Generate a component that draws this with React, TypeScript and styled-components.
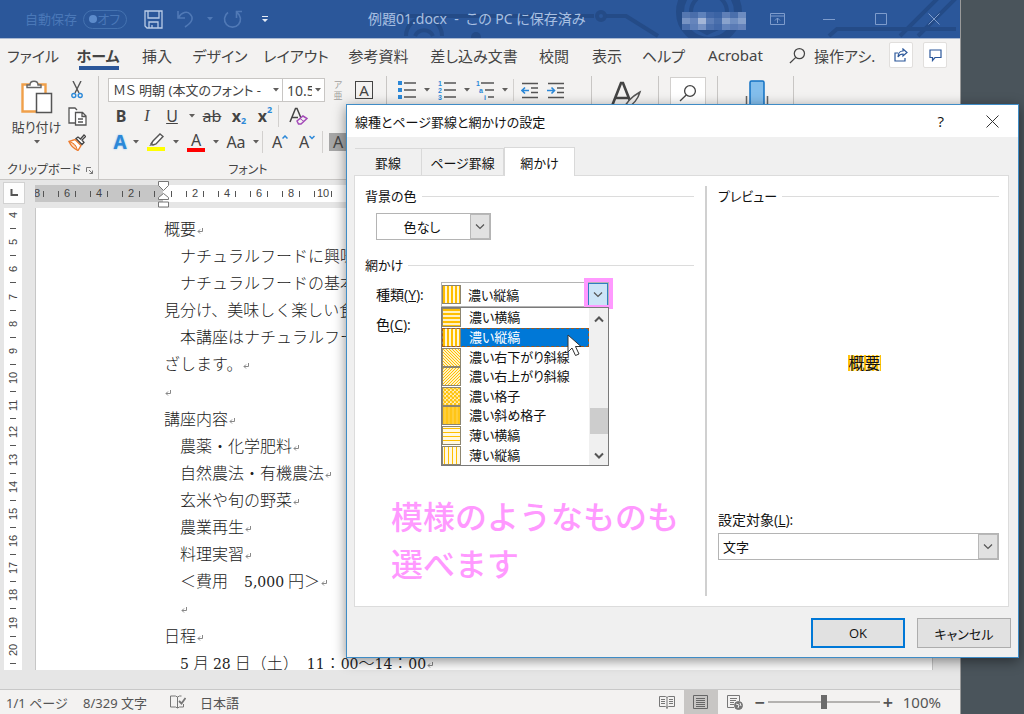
import React from "react";
import styled, { createGlobalStyle, css } from "styled-components";

const wordFont = `"Noto Sans", "Noto Sans CJK JP", sans-serif`;
const dialogFont = `"Open Sans", "Noto Sans CJK JP", sans-serif`;

const GlobalStyle = createGlobalStyle`
  *, *::before, *::after { box-sizing: border-box; }
  html, body { margin: 0; padding: 0; }
  body { overflow: hidden; font-family: ${wordFont}; font-feature-settings: "palt"; color: #444; }
  button, select, input { font: inherit; font-feature-settings: inherit; color: inherit; margin: 0; }
  button { padding: 0; border: 0; background: none; white-space: nowrap; }
  svg { display: block; flex: none; }
`;

/* ---------- desktop and window ---------- */

const Desktop = styled.div`
  position: relative;
  height: 100vh;
  overflow: hidden;
  background: #4a545b;
`;

const WordWindow = styled.div`
  display: flex;
  flex-direction: column;
  height: 100%;
  margin-right: 63px;
  background: #e6e6e6;
  border-right: 1px solid #9a9a9a;
`;

const TitleBar = styled.header`
  position: relative;
  display: flex;
  align-items: center;
  height: 38px;
  flex: none;
  overflow: hidden;
  background: #2b579a;
  color: #a9c0e2;
  font-size: 14px;
`;

const TitleDecor = styled.svg`
  position: absolute;
  top: 0;
  right: 0;
`;

const QuickAccess = styled.div`
  position: relative;
  display: flex;
  align-items: center;
  width: 368px;
  padding-left: 25px;
  flex: none;
`;

const AutoSave = styled.label`
  display: flex;
  align-items: center;
  gap: 6px;
  width: 118px;
  color: #4a78b8;
  font-size: 13px;
  line-height: 20px;
`;

const Toggle = styled.span`
  display: flex;
  align-items: center;
  justify-content: space-between;
  width: 44px;
  height: 19px;
  padding: 0 6px 0 5px;
  border: 1px solid #4472b0;
  border-radius: 10px;
`;

const ToggleKnob = styled.input`
  appearance: none;
  width: 8px;
  height: 8px;
  border-radius: 50%;
  background: #5c8bcb;
`;

const QuickButton = styled.button<{ $w: number }>`
  display: flex;
  align-items: center;
  justify-content: center;
  width: ${(p) => p.$w}px;
  height: 26px;
`;

const DocTitle = styled.div`
  position: relative;
  flex: 1;
  white-space: pre;
  line-height: 20px;
`;

const WindowButtons = styled.div`
  position: relative;
  display: flex;
  align-items: center;
`;

/* ---------- ribbon ---------- */

const TabBar = styled.nav`
  display: flex;
  align-items: center;
  height: 37px;
  flex: none;
  padding-bottom: 4px;
  background: #f3f2f1;
  border-top: 1px solid #aab9d2;
  font-size: 15px;
`;

const RibbonTab = styled.button<{ $w: number; $active?: boolean }>`
  position: relative;
  flex: none;
  width: ${(p) => p.$w}px;
  height: 32px;
  color: #444;
  ${(p) =>
    p.$active &&
    css`
      font-weight: 700;
      &::after {
        content: "";
        position: absolute;
        left: 13px;
        right: 11px;
        bottom: 1px;
        height: 4px;
        background: #2b579a;
      }
    `}
`;

const TellMe = styled.button`
  display: flex;
  align-items: center;
  gap: 8px;
  width: 93px;
  margin-left: 12px;
  overflow: hidden;
`;

const TabEnd = styled.div`
  display: flex;
  gap: 10px;
  margin-left: auto;
  padding-right: 13px;
`;

const SquareButton = styled.button`
  display: grid;
  place-items: center;
  width: 24px;
  height: 26px;
  border: 1px solid #e1dfdd;
  border-radius: 2px;
  background: #fff;
`;

const RibbonBody = styled.div`
  display: flex;
  height: 105px;
  flex: none;
  padding: 1px 0 0;
  background: #f3f2f1;
  border-bottom: 1px solid #c8c6c4;
`;

const Group = styled.section<{ $w: number; $pad?: number }>`
  display: flex;
  flex-direction: column;
  flex: none;
  width: ${(p) => p.$w}px;
  padding: 1px 0 0 ${(p) => p.$pad ?? 0}px;
  border-right: 1px solid #c8c6c4;
`;

const ToolRow = styled.div`
  display: flex;
  align-items: center;
  height: 26px;
`;

const Tool = styled.button<{ $w: number }>`
  display: flex;
  align-items: center;
  justify-content: center;
  flex: none;
  width: ${(p) => p.$w}px;
  height: 24px;
  color: #444;
  font-size: 16px;
  line-height: 24px;
`;

const ToolSeparator = styled.span`
  flex: none;
  width: 1px;
  height: 22px;
  margin: 0 3px 0 2px;
  background: #d2d0ce;
`;

const GroupLabel = styled.div<{ $center?: boolean }>`
  display: flex;
  align-items: center;
  justify-content: ${(p) => (p.$center ? "center" : "space-between")};
  height: 18px;
  margin-top: auto;
  padding: 0 5px 0 7px;
  font-size: 12px;
  line-height: 18px;
  white-space: nowrap;
`;

const ClipboardTools = styled.div`
  display: flex;
`;

const PasteButton = styled.button`
  display: flex;
  flex-direction: column;
  align-items: center;
  width: 65px;
  padding: 3px 0 0 8px;
  font-size: 13px;
  line-height: 20px;
  gap: 3px;
`;

const RibbonCombo = styled.span<{ $w: number }>`
  display: grid;
  align-items: center;
  width: ${(p) => p.$w}px;
  height: 24px;
  border: 1px solid #c8c6c4;
  background: #fff;
  & + & {
    border-left: 0;
  }
  > select,
  > svg {
    grid-area: 1 / 1;
  }
  > svg {
    justify-self: end;
    margin-right: 3px;
    pointer-events: none;
  }
`;

const RibbonSelect = styled.select`
  appearance: none;
  width: 100%;
  min-width: 0;
  height: 22px;
  padding: 0 12px 0 4px;
  border: 0;
  background: none;
  font-size: 14px;
`;

const FontSelect = styled(RibbonSelect)`
  font-size: 13px;
`;

const Ruby = styled.span`
  display: flex;
  flex-direction: column;
  color: #a19f9d;
  font-size: 9px;
  line-height: 11px;
`;

const BoxedA = styled.span`
  width: 18px;
  height: 18px;
  border: 1px solid #444;
  font-size: 15px;
  line-height: 16px;
`;

const ShadedA = styled.span`
  width: 18px;
  height: 18px;
  background: #a6a6a6;
  line-height: 18px;
`;

const BarLetter = styled.span<{ $bar: string }>`
  width: 18px;
  height: 20px;
  border-bottom: 4px solid ${(p) => p.$bar};
  line-height: 16px;
`;

const Script = styled.span<{ $up?: boolean }>`
  align-self: ${(p) => (p.$up ? "flex-start" : "flex-end")};
  color: #2b88d8;
  font-size: 9px;
  font-weight: 700;
  line-height: ${(p) => (p.$up ? 12 : 14)}px;
`;

const Styled = styled.span<{ $kind: "bold" | "italic" | "underline" | "strike" }>`
  font-weight: ${(p) => (p.$kind === "bold" ? 700 : 400)};
  font-style: ${(p) => (p.$kind === "italic" ? "italic" : "normal")};
  font-family: ${(p) => (p.$kind === "italic" ? `"Liberation Serif", serif` : "inherit")};
  text-decoration: ${(p) =>
    p.$kind === "underline" ? "underline" : p.$kind === "strike" ? "line-through" : "none"};
`;

const OutlineA = styled.span`
  color: #2b88d8;
  font-size: 19px;
  font-weight: 700;
  text-shadow: 0 0 2px #7db8ea;
`;

const FindBox = styled.button`
  display: flex;
  justify-content: center;
  width: 36px;
  height: 34px;
  margin-left: 11px;
  padding-top: 6px;
  border: 1px solid #d2d0ce;
  background: #fff;
`;

const TopTool = styled.button`
  display: flex;
  justify-content: center;
  padding: 1px 0 0 2px;
`;

/* ---------- document area ---------- */

const Workspace = styled.main`
  display: grid;
  grid-template-columns: 35px 1fr;
  grid-template-rows: 28px 1fr;
  flex: 1;
  min-height: 0;
  padding: 0 27px 19px 0;
  overflow: hidden;
`;

const TabStop = styled.button`
  width: 22px;
  height: 22px;
  margin: 2px 0 0 3px;
  background: #fdfdfd;
  border: 1px solid #d2d2d2;
  display: grid;
  place-items: center;
`;

const HRuler = styled.div`
  position: relative;
  display: flex;
  height: 17px;
  margin-top: 5px;
  overflow: hidden;
  background: linear-gradient(to right, #c6c6c6 128px, #fff 128px);
`;

const HRulerWrap = styled.div`
  position: relative;
`;

const HCell = styled.span<{ $half?: boolean }>`
  display: flex;
  align-items: center;
  justify-content: ${(p) => (p.$half ? "flex-end" : "space-between")};
  flex: none;
  width: ${(p) => (p.$half ? 16 : 32)}px;
  padding: 0 7px;
  font-family: "Liberation Sans", sans-serif;
  font-size: 11px;
  line-height: 17px;
  gap: ${(p) => (p.$half ? 3 : 0)}px;
  &::after,
  &::before {
    content: "";
    flex: none;
    width: 1px;
    height: 6px;
    background: #555;
  }
  &::before {
    display: ${(p) => (p.$half ? "none" : "block")};
  }
`;

const IndentMarker = styled.svg`
  position: absolute;
  left: 123px;
  top: 1px;
`;

const VRuler = styled.div`
  display: flex;
  flex-direction: column;
  width: 18px;
  margin-left: 4px;
  background: #fff;
  overflow: hidden;
`;

const VCell = styled.span`
  display: flex;
  flex-direction: column;
  align-items: center;
  flex: 1;
  font-family: "Liberation Sans", sans-serif;
  font-size: 11px;
  &::after {
    content: "";
    width: 6px;
    height: 1px;
    background: #555;
    margin-top: 6px;
  }
  > span {
    height: 14px;
    writing-mode: vertical-rl;
    transform: rotate(180deg);
    line-height: 14px;
    text-align: center;
  }
`;

const Page = styled.article`
  display: flex;
  flex-direction: column;
  gap: 1px;
  min-height: 0;
  overflow: hidden;
  padding: 8px 0 0 128px;
  background: #fff;
  border-left: 1px solid #c6c6c6;
  border-right: 1px solid #c6c6c6;
  color: #222;
  font-family: "Liberation Serif", "Noto Sans CJK JP", serif;
  font-feature-settings: normal;
  font-weight: 300;
  font-size: 16px;
`;

const DocLine = styled.p`
  display: flex;
  align-items: center;
  margin: 0;
  height: 27px;
  line-height: 27px;
  white-space: pre;
`;

const Digits = styled.span`
  font-family: "DejaVu Serif", serif;
  font-size: 14px;
`;

const StatusBar = styled.footer`
  display: flex;
  align-items: center;
  flex: none;
  height: 25px;
  padding: 0 19px 0 6px;
  border-top: 1px solid #c8c8c8;
  background: #f3f2f1;
  color: #555;
  font-size: 13px;
`;

const StatusItem = styled.span<{ $w?: number }>`
  width: ${(p) => (p.$w ? `${p.$w}px` : "auto")};
  white-space: nowrap;
`;

const ViewControls = styled.div`
  display: flex;
  align-items: center;
  height: 100%;
  margin-left: auto;
`;

const ViewButton = styled.button<{ $on?: boolean }>`
  display: grid;
  place-items: center;
  width: 34px;
  height: 24px;
  background: ${(p) => (p.$on ? "#c8c6c4" : "transparent")};
`;

const ZoomStep = styled.button`
  width: 16px;
  font-size: 18px;
  font-weight: 600;
  line-height: 20px;
`;

const ZoomSlider = styled.input`
  appearance: none;
  width: 112px;
  height: 16px;
  background: linear-gradient(#b4b2b0, #b4b2b0) center / 100% 2px no-repeat;
  &::-webkit-slider-thumb {
    appearance: none;
    width: 6px;
    height: 14px;
    background: #6b6b6b;
  }
`;

const ZoomValue = styled.span`
  margin-left: 7px;
  font-size: 15px;
`;

/* ---------- dialog ---------- */

const Dialog = styled.div`
  position: absolute;
  left: 346px;
  right: 5px;
  top: 104px;
  padding-bottom: 9px;
  border: 1px solid #3f8cc6;
  background: #f0f0f0;
  box-shadow: 0 3px 12px rgba(0, 0, 0, 0.45);
  color: #111;
  font-family: ${dialogFont};
  font-size: 13px;
`;

const DialogTitle = styled.div`
  display: flex;
  align-items: center;
  height: 32px;
  padding: 0 19px 0 8px;
  background: #fff;
`;

const TitleTools = styled.div`
  display: flex;
  align-items: center;
  gap: 42px;
  margin-left: auto;
  font-size: 15px;
`;

const Tabs = styled.div`
  display: flex;
  align-items: flex-end;
  height: 38px;
  margin: 0 9px 0 8px;
`;

const DialogTab = styled.button<{ $w: number; $active?: boolean }>`
  width: ${(p) => p.$w}px;
  height: ${(p) => (p.$active ? 29 : 27)}px;
  border: 1px solid #d9d9d9;
  border-bottom: 0;
  border-left-width: ${(p) => (p.$active ? 1 : 0)}px;
  ${(p) =>
    p.$active &&
    css`
      position: relative;
      margin-bottom: -1px;
      background: #fff;
    `}
`;

const Panel = styled.div`
  display: grid;
  grid-template-columns: 329px 2px 1fr;
  column-gap: 11px;
  min-height: 432px;
  margin: 0 9px 0 7px;
  padding: 10px 9px 10px 10px;
  border: 1px solid #dcdcdc;
  background: #fff;
`;

const Column = styled.div`
  display: flex;
  flex-direction: column;
`;

const Divider = styled.div`
  background: #d0d0d0;
`;

const Heading = styled.h3`
  display: flex;
  align-items: center;
  gap: 5px;
  margin: 0;
  font-size: 13px;
  font-weight: 400;
  line-height: 20px;
  &::after {
    content: "";
    flex: 1;
    height: 1px;
    background: #dcdcdc;
  }
`;

const Fields = styled.div`
  display: flex;
  flex-direction: column;
  gap: 5px;
  padding: 7px 0 15px 11px;
`;

const Field = styled.div`
  display: flex;
  align-items: center;
  min-height: 25px;
`;

const FieldLabel = styled.label`
  width: 65px;
  font-size: 14px;
  line-height: 20px;
  white-space: nowrap;
`;

const Combo = styled.div<{ $w?: number; $h: number }>`
  position: relative;
  display: flex;
  align-items: center;
  gap: 3px;
  width: ${(p) => (p.$w ? `${p.$w}px` : "100%")};
  height: ${(p) => p.$h}px;
  border: 1px solid #b4b4b4;
  background: #fff;
`;

const ComboSelect = styled.select<{ $center?: boolean }>`
  appearance: none;
  flex: 1;
  min-width: 0;
  height: 100%;
  padding: 0 4px;
  border: 0;
  background: none;
  color: #111;
  text-align: ${(p) => (p.$center ? "center" : "left")};
  text-align-last: ${(p) => (p.$center ? "center" : "left")};
`;

const ComboArrow = styled.span<{ $hot?: boolean }>`
  display: grid;
  place-items: center;
  align-self: stretch;
  width: 20px;
  border: 1px solid ${(p) => (p.$hot ? "#2f7fc0" : "#b8b8b8")};
  background: ${(p) => (p.$hot ? "#cce4f7" : "#e1e1e1")};
`;

const Marker = styled.span`
  position: absolute;
  right: -5px;
  top: -5px;
  width: 29px;
  height: 31px;
  border: 4px solid #ff99ff;
`;

const DropList = styled.div`
  position: absolute;
  z-index: 1;
  left: -1px;
  right: -1px;
  top: 24px;
  display: flex;
  height: 159px;
  border: 1px solid #7a7a7a;
  background: #fff;
`;

const Options = styled.ul`
  display: flex;
  flex-direction: column;
  flex: 1;
  margin: 0;
  padding: 0;
  list-style: none;
`;

const Option = styled.li<{ $on?: boolean }>`
  display: flex;
  align-items: center;
  gap: 8px;
  flex: 1;
  min-height: 0;
  line-height: 19px;
  white-space: nowrap;
  color: ${(p) => (p.$on ? "#fff" : "#111")};
  background: ${(p) => (p.$on ? "#0078d7" : "transparent")};
  outline: ${(p) => (p.$on ? "1px dashed #a0581c" : "none")};
  outline-offset: -1px;
`;

const ScrollBar = styled.div`
  display: flex;
  flex-direction: column;
  align-items: center;
  width: 19px;
  padding: 8px 0 6px;
  background: #f0f0f0;
`;

const ScrollThumb = styled.span`
  width: 18px;
  height: 26px;
  margin: auto 0 18px;
  background: #cdcdcd;
`;

const Cursor = styled.svg`
  position: absolute;
  z-index: 2;
  left: 125px;
  top: 51px;
`;

const PreviewArea = styled.div`
  display: flex;
  align-items: center;
  justify-content: center;
  flex: 1;
  padding-top: 10px;
  padding-left: 12px;
`;

const Sample = styled.span`
  font-size: 16px;
  line-height: 16px;
  font-feature-settings: normal;
  background: repeating-linear-gradient(to right, #ffc20a 0 2px, #fff0bd 2px 4px);
`;

const ApplyTo = styled.div`
  display: flex;
  flex-direction: column;
  gap: 3px;
  padding-bottom: 36px;
`;

const Note = styled.p`
  position: absolute;
  left: 44px;
  top: 388px;
  margin: 0;
  color: #ff99ff;
  font-size: 32px;
  font-weight: 500;
  font-feature-settings: normal;
  line-height: 47px;
`;

const DialogButtons = styled.div`
  display: flex;
  justify-content: flex-end;
  gap: 12px;
  padding: 11px 7px 0;
`;

const DialogButton = styled.button<{ $primary?: boolean }>`
  width: 94px;
  height: 30px;
  border: ${(p) => (p.$primary ? "2px solid #0078d7" : "1px solid #adadad")};
  background: #e1e1e1;
`;

/* ---------- small drawings ---------- */

const Caret = ({ color = "#605e5c" }: { color?: string }) => (
  <svg width="6" height="4" viewBox="0 0 6 4">
    <path d="M0 0h6L3 3.4z" fill={color} />
  </svg>
);

const Chevron = ({ up, heavy }: { up?: boolean; heavy?: boolean }) => (
  <svg width="10" height="7" viewBox="0 0 10 7" fill="none" stroke="#555" strokeWidth={heavy ? 2 : 1.2}>
    <path d={up ? "M1 5.5 5 1.5 9 5.5" : "M1 1.5 5 5.5 9 1.5"} />
  </svg>
);

const Magnifier = ({ size = 18 }: { size?: number }) => (
  <svg width={size} height={size} viewBox="0 0 18 18" fill="none" stroke="#444" strokeWidth="1.3">
    <circle cx="11" cy="7" r="5.4" />
    <path d="M7.2 11 1 17" />
  </svg>
);

const ReturnMark = () => (
  <svg width="8" height="8" viewBox="0 0 8 8" fill="none" stroke="#888">
    <path d="M6.5 2v3.5H2M4 3.5 2 5.5l2 2" />
  </svg>
);

const ListIcon = ({ kind }: { kind: "bullet" | "number" | "multi" }) => (
  <svg width="18" height="19" viewBox="0 0 18 19">
    {kind === "bullet" && <path d="M0 0h4v4H0zM0 7h4v4H0zM0 14h4v4H0z" fill="#2b88d8" />}
    {kind !== "bullet" && (
      <g fill="#2b88d8" fontSize="7" fontWeight="700" fontFamily="Liberation Sans, sans-serif">
        <text x="0" y="5">1</text>
        <text x={kind === "number" ? 0 : 3} y="12">{kind === "number" ? "2" : "a"}</text>
        <text x={kind === "number" ? 0 : 8} y="19">{kind === "number" ? "3" : "i"}</text>
      </g>
    )}
    <path
      d={kind === "multi" ? "M5 2h13M9 9h9M12 16h6" : "M6 2h12M6 9h12M6 16h12"}
      stroke="#555"
      strokeWidth="1.3"
    />
  </svg>
);

const IndentIcon = ({ right }: { right?: boolean }) => (
  <svg width="18" height="17" viewBox="0 0 18 17" fill="none" stroke="#555" strokeWidth="1.3">
    <path d="M1 1.5h16M10 6h7M10 10.5h7M1 15.5h16" />
    <path d={right ? "M0 8.5h7M4.5 5.5l3 3-3 3" : "M8 8.5H1M4 5.5l-3 3 3 3"} stroke="#2b88d8" strokeWidth="1.6" />
  </svg>
);

type Pattern = "h" | "v" | "down" | "up" | "grid" | "cross" | "thinH" | "thinV";

const patternCells: Record<Pattern, { size: number; d: string; bg: string; sw: number }> = {
  h: { size: 4, d: "M0 2h4", bg: "#fff1c4", sw: 2 },
  v: { size: 4, d: "M2 0v4", bg: "#fff6da", sw: 2 },
  down: { size: 3, d: "M0 0 3 3M-1 2l2 2M2-1l2 2", bg: "#fff1c4", sw: 1 },
  up: { size: 3, d: "M0 3 3 0M-1 1l2-2M2 4l2-2", bg: "#fff1c4", sw: 1 },
  grid: { size: 4, d: "M0 0h2v2H0zM2 2h2v2H2z", bg: "#fff1c4", sw: 0.5 },
  cross: { size: 4, d: "M0 1h4M1 0v4M0 3h4", bg: "#ffdd74", sw: 1.2 },
  thinH: { size: 4, d: "M0 2.5h4", bg: "#fff8e2", sw: 1 },
  thinV: { size: 4, d: "M2.5 0v4", bg: "#fff8e2", sw: 1 },
};

const Swatch = ({ kind, id }: { kind: Pattern; id: string }) => {
  const p = patternCells[kind];
  return (
    <svg width="19" height="19" viewBox="0 0 19 19">
      <defs>
        <pattern id={id} width={p.size} height={p.size} patternUnits="userSpaceOnUse">
          <rect width={p.size} height={p.size} fill={p.bg} />
          <path d={p.d} stroke="#ffbf00" strokeWidth={p.sw} fill={kind === "grid" ? "#ffc61a" : "none"} />
        </pattern>
      </defs>
      <rect x="0.5" y="0.5" width="18" height="18" fill={`url(#${id})`} stroke="#8c8570" />
    </svg>
  );
};

const mosaic = [
  ["#5577b0", "#4a6eab", "#5f82bb", "#4268a8", "#3b63a4", "#5f7fb7", "#4a6fac", "#6d8cc0"],
  ["#7793c3", "#6685bc", "#a4b6d7", "#5d7eb7", "#4a6fac", "#89a2cc", "#6f8ec1", "#86a0cb"],
  ["#4a6eab", "#5e7fb8", "#7692c4", "#4c70ad", "#4268a8", "#6484bb", "#5a7bb5", "#6482ba"],
];

/* ---------- data ---------- */

const ribbonTabs: [string, number][] = [
  ["ファイル", 66],
  ["ホーム", 64],
  ["挿入", 54],
  ["デザイン", 72],
  ["レイアウト", 80],
  ["参考資料", 85],
  ["差し込み文書", 106],
  ["校閲", 54],
  ["表示", 52],
  ["ヘルプ", 61],
  ["Acrobat", 83],
];

const sections = [
  [
    "概要",
    "　ナチュラルフードに興味",
    "　ナチュラルフードの基本",
    "見分け、美味しく楽しい食",
    "　本講座はナチュラルフー",
    "ざします。",
    "",
  ],
  [
    "講座内容",
    "　農薬・化学肥料",
    "　自然農法・有機農法",
    "　玄米や旬の野菜",
    "　農業再生",
    "　料理実習",
    "　＜費用　5,000 円＞",
    "　",
  ],
  ["日程", "　5 月 28 日（土）　11：00～14：00"],
];

const unmarked = new Set([1, 2, 3, 4]);

const options: [string, Pattern][] = [
  ["濃い横縞", "h"],
  ["濃い縦縞", "v"],
  ["濃い右下がり斜線", "down"],
  ["濃い右上がり斜線", "up"],
  ["濃い格子", "grid"],
  ["濃い斜め格子", "cross"],
  ["薄い横縞", "thinH"],
  ["薄い縦縞", "thinV"],
];

/* ---------- parts ---------- */

const Title = () => (
  <TitleBar>
    <TitleDecor width="620" height="38" viewBox="0 0 620 38" fill="none" stroke="#244b87" strokeWidth="4">
      <circle cx="62" cy="16" r="4" fill="#244b87" stroke="none" />
      <path d="M62 16h192M264 16h22l32 20" />
      <circle cx="261" cy="16" r="4" />
      <path d="M66 36a18 18 0 0 1 36 0M75 36a10 10 0 0 1 18 0" />
      <circle cx="136" cy="37" r="5" fill="#244b87" stroke="none" />
      <circle cx="369" cy="12" r="29" strokeWidth="8" />
      <circle cx="369" cy="12" r="18" />
      <path d="M352 25l15 8 18-8z" fill="#244b87" />
      <path d="M489 36l8-7h119M560 36l46-46M578 36l46-46" />
      <g stroke="none">
        {mosaic.map((row, y) =>
          row.map((c, x) => (
            <rect key={`${y}-${x}`} x={342 + x * 8} y={12 + y * 6} width="8" height="6" fill={c} />
          ))
        )}
      </g>
    </TitleDecor>
    <QuickAccess>
      <AutoSave>
        自動保存
        <Toggle>
          <ToggleKnob type="checkbox" />
          オフ
        </Toggle>
      </AutoSave>
      <QuickButton $w={20} aria-label="上書き保存">
        <svg width="19" height="19" viewBox="0 0 19 19" fill="none" stroke="#b9cbe6" strokeWidth="1.3">
          <path d="M1 1h17v17H3l-2-2zM4 1v7h11V1M5 18v-6h9v6M8 18v-3" />
        </svg>
      </QuickButton>
      <QuickButton $w={44} aria-label="元に戻す">
        <svg width="17" height="18" viewBox="0 0 17 18" fill="none" stroke="#5079b6" strokeWidth="1.6">
          <path d="M1 1v7h7M1.500 7.500C5 2 10 1 13 4s4 7-5 13" />
        </svg>
      </QuickButton>
      <Caret color="#5079b6" />
      <QuickButton $w={38} aria-label="やり直し">
        <svg width="19" height="19" viewBox="0 0 19 19" fill="none" stroke="#5079b6" strokeWidth="1.6">
          <path d="M5 2.5a8 8 0 1 0 9 0M13.500 8V1.500h5.500" />
        </svg>
      </QuickButton>
      <QuickButton $w={28} aria-label="ツール バーのカスタマイズ">
        <svg width="6" height="7" viewBox="0 0 6 7" fill="#e6edf7">
          <path d="M0 0h6v1H0zM0 3h6L3 6z" />
        </svg>
      </QuickButton>
    </QuickAccess>
    <DocTitle>{"例題01.docx  -  この PC に保存済み"}</DocTitle>
    <WindowButtons>
      <QuickButton $w={52} aria-label="リボンの表示オプション">
        <svg width="15" height="12" viewBox="0 0 15 12" fill="none" stroke="#7e9ccc">
          <path d="M.5.5h14v11H.5zM.5 3h14M7.5 10V5M5 7.5 7.5 5 10 7.5" />
        </svg>
      </QuickButton>
      <QuickButton $w={52} aria-label="最小化">
        <svg width="12" height="12" viewBox="0 0 12 12" stroke="#7e9ccc">
          <path d="M0 6.5h12" />
        </svg>
      </QuickButton>
      <QuickButton $w={52} aria-label="最大化">
        <svg width="12" height="12" viewBox="0 0 12 12" fill="none" stroke="#7e9ccc">
          <path d="M.5.5h11v11H.5z" />
        </svg>
      </QuickButton>
      <QuickButton $w={53} aria-label="閉じる">
        <svg width="12" height="12" viewBox="0 0 12 12" stroke="#7e9ccc">
          <path d="M.5.5l11 11M11.5.5l-11 11" />
        </svg>
      </QuickButton>
    </WindowButtons>
  </TitleBar>
);

const RibbonTabs = () => (
  <TabBar>
    {ribbonTabs.map(([name, w]) => (
      <RibbonTab key={name} $w={w} $active={name === "ホーム"}>
        {name}
      </RibbonTab>
    ))}
    <TellMe>
      <Magnifier size={17} />
      操作アシ.
    </TellMe>
    <TabEnd>
      <SquareButton aria-label="共有">
        <svg width="14" height="14" viewBox="0 0 14 14" fill="none" stroke="#2b579a" strokeWidth="1.2">
          <path d="M4 5H1v8h10v-3M9 1l4 3.5L9 8V6C6.5 6 5 7 4 9c0-3.5 2-6 5-6z" />
        </svg>
      </SquareButton>
      <SquareButton aria-label="コメント">
        <svg width="13" height="13" viewBox="0 0 13 13" fill="none" stroke="#2b579a" strokeWidth="1.2">
          <path d="M1 1h11v7.5H6L3.5 11.5v-3H1z" />
        </svg>
      </SquareButton>
    </TabEnd>
  </TabBar>
);

const Ribbon = () => (
  <RibbonBody>
    <Group $w={99}>
      <ClipboardTools>
        <PasteButton>
          <svg width="32" height="34" viewBox="0 0 32 34" fill="none">
            <path d="M1.5 4.5h23v27h-23z" fill="#fff" stroke="#f0a04a" strokeWidth="2.4" />
            <path d="M6 7.5V5h3c0-5 8-5 8 0h3v2.5z" fill="#fff" stroke="#666" strokeWidth="1.4" />
            <path d="M15.5 13.5h15v19h-15z" fill="#fff" stroke="#555" strokeWidth="1.5" />
          </svg>
          貼り付け
          <Caret />
        </PasteButton>
        <div>
          <ToolRow>
            <Tool $w={24} aria-label="切り取り">
              <svg width="12" height="18" viewBox="0 0 12 18" fill="none">
                <path d="M2 0l6 12M10 0 4 12" stroke="#555" strokeWidth="1.4" />
                <circle cx="2.8" cy="14.5" r="2" stroke="#2b88d8" strokeWidth="1.4" />
                <circle cx="9.2" cy="14.5" r="2" stroke="#2b88d8" strokeWidth="1.4" />
              </svg>
            </Tool>
          </ToolRow>
          <ToolRow>
            <Tool $w={24} aria-label="コピー">
              <svg width="19" height="19" viewBox="0 0 19 19" fill="#fff" stroke="#555" strokeWidth="1.3">
                <path d="M7 16H1V1h6l2 2M7.5 5.5h7l3.5 3.5v9H7.5zM14 6v3.5h3.5M10 12h5M10 15h5" />
              </svg>
            </Tool>
          </ToolRow>
          <ToolRow>
            <Tool $w={24} aria-label="書式のコピー">
              <svg width="18" height="17" viewBox="0 0 18 17" fill="none">
                <path d="M1 7.5 7 5.5l6 6-3 5C5.5 14.5 3 12 1 7.5z" fill="#fff" stroke="#ed7d31" strokeWidth="1.4" />
                <path d="M2 8c4 1 6 3 7 7" fill="#f9b27d" stroke="#ed7d31" />
                <path d="M8 4.5 10 3l2.5 2L16 1l1.5 1.5L14 6l2 2.5-2 2z" fill="#fff" stroke="#444" strokeWidth="1.3" />
              </svg>
            </Tool>
          </ToolRow>
        </div>
      </ClipboardTools>
      <GroupLabel>
        クリップボード
        <svg width="7" height="7" viewBox="0 0 7 7" fill="none" stroke="#777">
          <path d="M.5 5V.5H5M3 3l3.5 3.5M6.5 3.5v3h-3" />
        </svg>
      </GroupLabel>
    </Group>
    <Group $w={288} $pad={9}>
      <ToolRow>
        <RibbonCombo $w={175}>
          <FontSelect aria-label="フォント名">
            <option>ＭＳ 明朝 (本文のフォント - </option>
          </FontSelect>
          <Caret />
        </RibbonCombo>
        <RibbonCombo $w={42}>
          <RibbonSelect aria-label="フォント サイズ">
            <option>10.5</option>
          </RibbonSelect>
          <Caret />
        </RibbonCombo>
        <Tool $w={26} aria-label="ルビ">
          <Ruby>
            <span>ア</span>
            <span>亜</span>
          </Ruby>
        </Tool>
        <Tool $w={26} aria-label="囲み線">
          <BoxedA>A</BoxedA>
        </Tool>
      </ToolRow>
      <ToolRow>
        <Tool $w={26}><Styled $kind="bold">B</Styled></Tool>
        <Tool $w={26}><Styled $kind="italic">I</Styled></Tool>
        <Tool $w={24}><Styled $kind="underline">U</Styled></Tool>
        <Tool $w={16} aria-label="下線の種類"><Caret /></Tool>
        <Tool $w={24}><Styled $kind="strike">ab</Styled></Tool>
        <Tool $w={30}><Styled $kind="bold">x</Styled><Script>2</Script></Tool>
        <Tool $w={22}><Styled $kind="bold">x</Styled><Script $up>2</Script></Tool>
        <ToolSeparator />
        <Tool $w={32} aria-label="書式のクリア">
          <svg width="19" height="19" viewBox="0 0 19 19" fill="none">
            <path d="M1 15 6.5 1.5h1.500L12 11M3 10.5h6" stroke="#444" strokeWidth="1.5" />
            <path d="M8 14l6-5 4 2.5-6 5.5H9.500z" fill="#f3f2f1" stroke="#a349b8" strokeWidth="1.5" />
            <path d="M11 11.5l4 3" stroke="#a349b8" />
          </svg>
        </Tool>
      </ToolRow>
      <ToolRow>
        <Tool $w={24}><OutlineA>A</OutlineA></Tool>
        <Tool $w={8} aria-label="文字の効果"><Caret /></Tool>
        <Tool $w={32} aria-label="蛍光ペン">
          <svg width="18" height="18" viewBox="0 0 18 18" fill="none">
            <path d="M4 11 6 8l7-7 3 2.500L9 11l-3 1z" fill="#fff" stroke="#555" strokeWidth="1.4" />
            <path d="M2 13l3-3 2 2z" fill="#666" />
            <path d="M0 14h18v4H0z" fill="#ffff00" />
          </svg>
        </Tool>
        <Tool $w={8} aria-label="蛍光ペンの色"><Caret /></Tool>
        <Tool $w={32}><BarLetter $bar="#ff0000">A</BarLetter></Tool>
        <Tool $w={8} aria-label="フォントの色"><Caret /></Tool>
        <Tool $w={32}>Aa</Tool>
        <Tool $w={8} aria-label="文字種の変換"><Caret /></Tool>
        <ToolSeparator />
        <Tool $w={28}>
          A
          <svg width="6" height="14" viewBox="0 0 6 14" fill="none" stroke="#2b88d8" strokeWidth="1.5">
            <path d="M.5 3.5 3 1l2.5 2.5" />
          </svg>
        </Tool>
        <Tool $w={26}>
          A
          <svg width="6" height="14" viewBox="0 0 6 14" fill="none" stroke="#2b88d8" strokeWidth="1.5">
            <path d="M.5 1 3 3.5 5.5 1" />
          </svg>
        </Tool>
        <ToolSeparator />
        <Tool $w={24}><ShadedA>A</ShadedA></Tool>
      </ToolRow>
      <GroupLabel $center>フォント</GroupLabel>
    </Group>
    <Group $w={205} $pad={4}>
      <ToolRow>
        <Tool $w={32} aria-label="箇条書き"><ListIcon kind="bullet" /></Tool>
        <Tool $w={8} aria-label="行頭文字"><Caret /></Tool>
        <Tool $w={32} aria-label="段落番号"><ListIcon kind="number" /></Tool>
        <Tool $w={8} aria-label="番号書式"><Caret /></Tool>
        <Tool $w={28} aria-label="アウトライン"><ListIcon kind="multi" /></Tool>
        <Tool $w={12} aria-label="リスト書式"><Caret /></Tool>
        <ToolSeparator />
        <Tool $w={26} aria-label="インデントを減らす"><IndentIcon /></Tool>
        <Tool $w={26} aria-label="インデントを増やす"><IndentIcon right /></Tool>
      </ToolRow>
    </Group>
    <Group $w={67}>
      <TopTool aria-label="スタイル">
        <svg width="32" height="32" viewBox="0 0 32 32" fill="none">
          <path d="M2 28 11 5h2L22 28M5.5 20h13" stroke="#444" strokeWidth="2.6" />
          <path d="M14 31c2-7 9-13 16-17-2 7-7 13-12 15z" fill="#f3f2f1" stroke="#555" strokeWidth="1.5" />
        </svg>
      </TopTool>
    </Group>
    <Group $w={59}>
      <FindBox aria-label="検索"><Magnifier /></FindBox>
    </Group>
    <Group $w={76}>
      <TopTool aria-label="ディクテーション">
        <svg width="24" height="32" viewBox="0 0 24 32" fill="none">
          <path d="M1.5 18v12M22.5 18v12" stroke="#666" strokeWidth="1.5" />
          <rect x="5" y="3" width="14" height="28" rx="1.5" fill="#83beec" stroke="#1272c4" strokeWidth="1.5" />
        </svg>
      </TopTool>
    </Group>
  </RibbonBody>
);

const DocumentArea = () => (
  <Workspace>
    <TabStop aria-label="タブの種類">
      <svg width="8" height="8" viewBox="0 0 8 8" fill="none" stroke="#555" strokeWidth="2">
        <path d="M1.5 0v6H8" />
      </svg>
    </TabStop>
    <HRulerWrap>
      <HRuler>
        <HCell $half>8</HCell>
        {["6", "4", "2", "", "2", "4", "6", "8", "10", "12"].map((n, i) => (
          <HCell key={i}>{n}</HCell>
        ))}
      </HRuler>
      <IndentMarker width="11" height="27" viewBox="0 0 11 27" fill="#fff" stroke="#777">
        <path d="M.5.5h10v4L5.5 9.5l-5-5zM.5 18.5v-2l5-4 5 4v2zM.5 21h10v5H.5z" />
      </IndentMarker>
    </HRulerWrap>
    <VRuler>
      {Array.from({ length: 17 }, (_, i) => (
        <VCell key={i}>
          <span>{i + 4}</span>
        </VCell>
      ))}
    </VRuler>
    <Page>
      {sections.map((lines, s) => (
        <div key={s}>
          {lines.map((text, i) => (
            <DocLine key={i}>
              <span>
                {text.split(/([\d,]+)/).map((part, k) => (k % 2 ? <Digits key={k}>{part}</Digits> : part))}
              </span>
              {!(s === 0 && unmarked.has(i)) && <ReturnMark />}
            </DocLine>
          ))}
        </div>
      ))}
    </Page>
  </Workspace>
);

const Status = () => (
  <StatusBar>
    <StatusItem $w={77}>1/1 ページ</StatusItem>
    <StatusItem $w={87}>8/329 文字</StatusItem>
    <StatusItem $w={30}>
      <svg width="16" height="14" viewBox="0 0 16 14" fill="none" stroke="#777">
        <path d="M7.5 2v11M.5 1h5l2 1 2-1h2M.5 1v11h5l2 1 2-1h4V9" />
        <path d="M9 6l2.5 2.5L15.5 3" strokeWidth="1.8" />
      </svg>
    </StatusItem>
    <StatusItem>日本語</StatusItem>
    <ViewControls>
      <ViewButton aria-label="閲覧モード">
        <svg width="16" height="14" viewBox="0 0 16 14" fill="none" stroke="#777">
          <path d="M.5 1.5h6L8 2.5l1.5-1h6v10h-6L8 12.5l-1.5-1h-6zM8 2.5V14M2 4.5h4M2 6.5h4M2 8.5h4M10 4.5h4M10 6.5h4M10 8.5h4" />
        </svg>
      </ViewButton>
      <ViewButton $on aria-label="印刷レイアウト">
        <svg width="15" height="14" viewBox="0 0 15 14" fill="none" stroke="#666">
          <path d="M.5.5h14v13H.5zM3 3.5h9M3 5.5h9M3 7.5h9M3 9.5h9M3 11.5h9" />
        </svg>
      </ViewButton>
      <ViewButton aria-label="Web レイアウト">
        <svg width="16" height="15" viewBox="0 0 16 15" fill="none" stroke="#777">
          <path d="M7 12.5H.5V.5h12V6M3 3.5h7M3 5.5h6M3 7.5h4M3 9.5h4" />
          <circle cx="11.5" cy="10.5" r="4" fill="#777" />
          <path d="M9 9l3 1-1 3M13 8l1 3" stroke="#eee" />
        </svg>
      </ViewButton>
      <ZoomStep aria-label="縮小">−</ZoomStep>
      <ZoomSlider type="range" min={0} max={100} defaultValue={50} aria-label="ズーム" />
      <ZoomStep aria-label="拡大">+</ZoomStep>
      <ZoomValue>100%</ZoomValue>
    </ViewControls>
  </StatusBar>
);

const BordersDialog = () => (
  <Dialog role="dialog" aria-labelledby="dlg-title">
    <DialogTitle>
      <span id="dlg-title">線種とページ罫線と網かけの設定</span>
      <TitleTools>
        <button aria-label="ヘルプ">?</button>
        <button aria-label="閉じる">
          <svg width="13" height="13" viewBox="0 0 13 13" stroke="#333">
            <path d="M.5.5l12 12M12.5.5l-12 12" />
          </svg>
        </button>
      </TitleTools>
    </DialogTitle>
    <Tabs role="tablist">
      <DialogTab role="tab" $w={67}>罫線</DialogTab>
      <DialogTab role="tab" $w={82}>ページ罫線</DialogTab>
      <DialogTab role="tab" aria-selected $w={71} $active>網かけ</DialogTab>
    </Tabs>
    <Panel>
      <Column>
        <Heading>背景の色</Heading>
        <Fields>
          <Combo $w={115} $h={27}>
            <ComboSelect $center aria-label="背景の色">
              <option>色なし</option>
            </ComboSelect>
            <ComboArrow><Chevron /></ComboArrow>
          </Combo>
        </Fields>
        <Heading>網かけ</Heading>
        <Fields>
          <Field>
            <FieldLabel htmlFor="style">種類(<u>Y</u>):</FieldLabel>
            <Combo $w={168} $h={25}>
              <Swatch kind="v" id="pat-current" />
              <ComboSelect id="style">
                <option>濃い縦縞</option>
              </ComboSelect>
              <ComboArrow $hot><Chevron /></ComboArrow>
              <Marker />
              <DropList>
                <Options role="listbox" aria-label="種類">
                  {options.map(([name, kind]) => (
                    <Option key={name} role="option" aria-selected={kind === "v"} $on={kind === "v"}>
                      <Swatch kind={kind} id={`pat-${kind}`} />
                      {name}
                    </Option>
                  ))}
                </Options>
                <ScrollBar>
                  <Chevron up heavy />
                  <ScrollThumb />
                  <Chevron heavy />
                </ScrollBar>
              </DropList>
              <Cursor width="16" height="24" viewBox="0 0 16 24">
                <path d="M1 1v17l4-4 3.5 7.5 3.5-1.5-3.5-7.5H14z" fill="#fff" stroke="#333" />
              </Cursor>
            </Combo>
          </Field>
          <Field>
            <FieldLabel as="span">色(<u>C</u>):</FieldLabel>
          </Field>
        </Fields>
      </Column>
      <Divider />
      <Column>
        <Heading>プレビュー</Heading>
        <PreviewArea>
          <Sample>概要</Sample>
        </PreviewArea>
        <ApplyTo>
          <FieldLabel htmlFor="apply">設定対象(<u>L</u>):</FieldLabel>
          <Combo $h={27}>
            <ComboSelect id="apply">
              <option>文字</option>
            </ComboSelect>
            <ComboArrow><Chevron /></ComboArrow>
          </Combo>
        </ApplyTo>
      </Column>
    </Panel>
    <DialogButtons>
      <DialogButton $primary>OK</DialogButton>
      <DialogButton>キャンセル</DialogButton>
    </DialogButtons>
    <Note>
      模様のようなものも
      <br />
      選べます
    </Note>
  </Dialog>
);

export default function App() {
  return (
    <Desktop lang="ja">
      <GlobalStyle />
      <WordWindow>
        <Title />
        <RibbonTabs />
        <Ribbon />
        <DocumentArea />
        <Status />
      </WordWindow>
      <BordersDialog />
    </Desktop>
  );
}
